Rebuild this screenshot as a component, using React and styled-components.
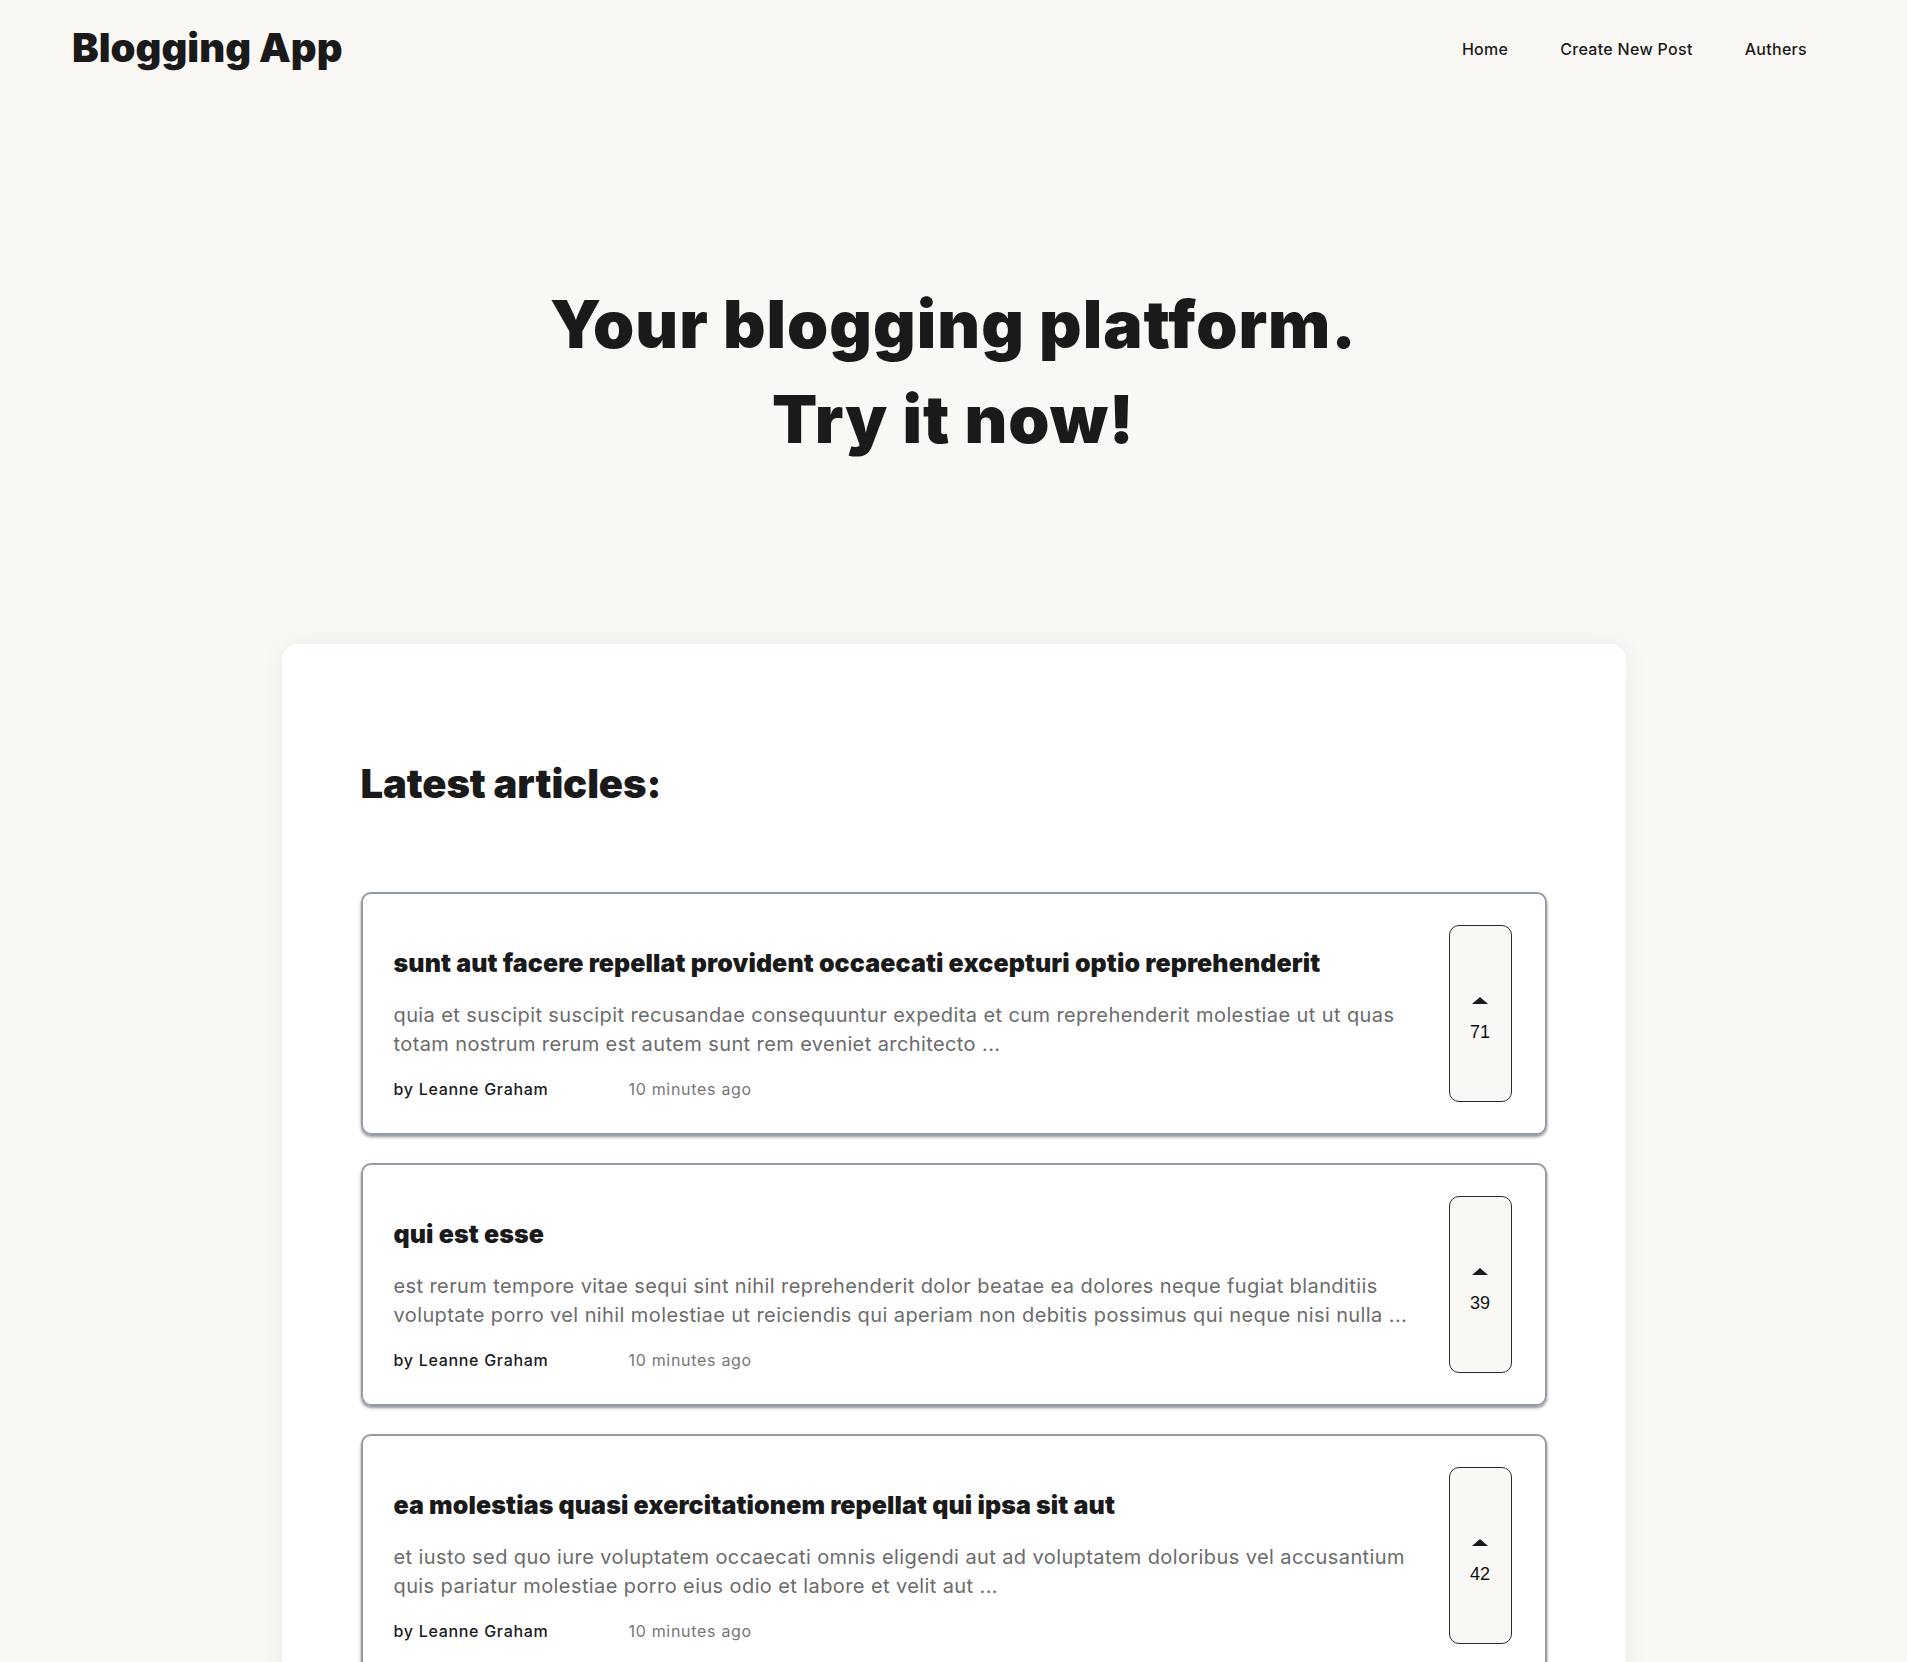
import React from 'react'
import styled, { createGlobalStyle } from 'styled-components'

const GlobalStyle = createGlobalStyle`
  * {
    box-sizing: border-box;
  }

  body {
    margin: 0;
    background-color: #f9f8f5;
    color: #1a1a1a;
    font-family: Inter, "Open Sans", sans-serif;
  }
`

const posts = [
  {
    id: 1,
    title: 'sunt aut facere repellat provident occaecati excepturi optio reprehenderit',
    body: 'quia et suscipit suscipit recusandae consequuntur expedita et cum reprehenderit molestiae ut ut quas totam nostrum rerum est autem sunt rem eveniet architecto ...',
    author: 'Leanne Graham',
    votes: 71,
  },
  {
    id: 2,
    title: 'qui est esse',
    body: 'est rerum tempore vitae sequi sint nihil reprehenderit dolor beatae ea dolores neque fugiat blanditiis voluptate porro vel nihil molestiae ut reiciendis qui aperiam non debitis possimus qui neque nisi nulla ...',
    author: 'Leanne Graham',
    votes: 39,
  },
  {
    id: 3,
    title: 'ea molestias quasi exercitationem repellat qui ipsa sit aut',
    body: 'et iusto sed quo iure voluptatem occaecati omnis eligendi aut ad voluptatem doloribus vel accusantium quis pariatur molestiae porro eius odio et labore et velit aut ...',
    author: 'Leanne Graham',
    votes: 42,
  },
  {
    id: 4,
    title: 'eum et est occaecati',
    body: 'ullam et saepe reiciendis voluptatem adipisci sit amet autem assumenda provident rerum culpa quis hic commodi nesciunt rem tenetur doloremque ipsam iure ...',
    author: 'Leanne Graham',
    votes: 18,
  },
]

const Header = styled.header`
  display: flex;
  align-items: center;
  justify-content: space-between;
  height: 96px;
  padding: 0 100px 0 72px;
`

const Logo = styled.a`
  font-size: 40px;
  font-weight: 900;
  line-height: 60px;
  color: #1a1a1a;
  text-decoration: none;
`

const Nav = styled.nav`
  display: flex;
  gap: 52px;
  padding-top: 2px;
`

const NavLink = styled.a`
  font-size: 16px;
  font-weight: 500;
  line-height: 24px;
  letter-spacing: 0.3px;
  color: #1a1a1a;
  text-decoration: none;
`

const Hero = styled.h1`
  margin: 181px 0 177px;
  font-size: 66px;
  font-weight: 900;
  line-height: 95px;
  letter-spacing: 1px;
  text-align: center;
`

const Panel = styled.main`
  width: 1344px;
  margin: 0 auto;
  padding: 110px 79px 80px;
  background-color: #ffffff;
  border-radius: 16px;
  box-shadow: 0 0 26px rgba(0, 0, 0, 0.06);
`

const SectionTitle = styled.h2`
  margin: 0 0 78px;
  font-size: 40px;
  font-weight: 900;
  line-height: 60px;
  letter-spacing: -0.1px;
`

const List = styled.div`
  display: flex;
  flex-direction: column;
  gap: 28px;
`

const Card = styled.article`
  display: flex;
  align-items: flex-start;
  gap: 32px;
  padding: 31px 33px 31px 31px;
  border: 2px solid #949ca5;
  border-radius: 10px;
  box-shadow: 0 2px 3px rgba(30, 40, 50, 0.5);
`

const Content = styled.div`
  flex: 1;
  padding-top: 22px;
`

const Title = styled.h3`
  margin: 0;
  font-size: 25px;
  font-weight: 900;
  line-height: 32px;
  letter-spacing: 0.1px;
`

const Excerpt = styled.p`
  margin: 22px 0 19px;
  font-size: 20px;
  line-height: 28.5px;
  letter-spacing: 0.4px;
  color: #6b6b6b;
`

const Meta = styled.div`
  display: flex;
  gap: 80px;
  font-size: 16px;
  line-height: 24px;
  letter-spacing: 0.7px;
`

const Author = styled.span`
  font-weight: 500;
  color: #1a1a1a;
`

const Time = styled.span`
  color: #777777;
`

const Vote = styled.button`
  display: flex;
  flex-direction: column;
  align-items: center;
  flex: none;
  width: 63px;
  height: 177px;
  padding: 71px 0 0;
  background-color: #f9f8f5;
  border: 1px solid #2b2b2b;
  border-radius: 10px;
  font-family: "Liberation Sans", Arial, sans-serif;
  font-size: 18px;
  line-height: 20px;
  color: #111111;
  cursor: pointer;
`

const Count = styled.span`
  margin-top: 18px;
`

const Caret = () => (
  <svg width="16" height="7" viewBox="0 0 16 7" aria-hidden="true">
    <polygon points="8,0 16,7 0,7" fill="#1a1a1a" />
  </svg>
)

const PostCard = ({ post }) => (
  <Card>
    <Content>
      <Title>{ post.title }</Title>
      <Excerpt>{ post.body }</Excerpt>
      <Meta>
        <Author>by { post.author }</Author>
        <Time>10 minutes ago</Time>
      </Meta>
    </Content>
    <Vote type="button">
      <Caret />
      <Count>{ post.votes }</Count>
    </Vote>
  </Card>
)

const App = () => (
  <>
    <GlobalStyle />
    <Header>
      <Logo href="#">Blogging App</Logo>
      <Nav>
        <NavLink href="#">Home</NavLink>
        <NavLink href="#">Create New Post</NavLink>
        <NavLink href="#">Authers</NavLink>
      </Nav>
    </Header>
    <Hero>
      Your blogging platform.
      <br />
      Try it now!
    </Hero>
    <Panel>
      <SectionTitle>Latest articles:</SectionTitle>
      <List>
        { posts.map(post => <PostCard key={ post.id } post={ post } />) }
      </List>
    </Panel>
  </>
)

export default App
